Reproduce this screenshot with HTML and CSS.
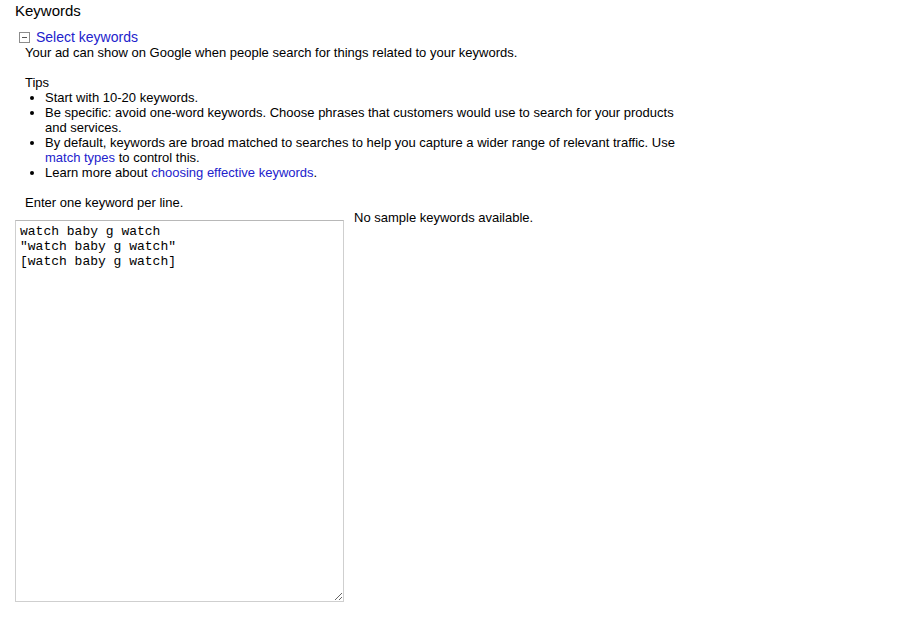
FILE: index.html
```html
<!DOCTYPE html>
<html lang="en">
<head>
  <meta charset="UTF-8">
  <title>Keywords</title>
  <link rel="stylesheet" href="styles.css">
</head>
<body>
  <div class="page">
    <!-- Section title -->
    <h2 class="title">Keywords</h2>

    <div class="section">
      <div class="section-head">
        <svg class="toggle" width="11" height="11" viewBox="0 0 11 11">
          <rect x="0.5" y="0.5" width="10" height="10" fill="#fff" stroke="#8c8c8c"/>
          <line x1="3" y1="5.5" x2="8" y2="5.5" stroke="#555"/>
        </svg>
        <a href="#" class="section-link">Select keywords</a>
      </div>

      <div class="section-body">
        <p>Your ad can show on Google when people search for things related to your keywords.</p>

        <div class="tips">
          <p>Tips</p>
          <ul>
            <li>Start with 10-20 keywords.</li>
            <li>Be specific: avoid one-word keywords. Choose phrases that customers would use to search for your products and services.</li>
            <li>By default, keywords are broad matched to searches to help you capture a wider range of relevant traffic. Use <a href="#">match types</a> to control this.</li>
            <li>Learn more about <a href="#">choosing effective keywords</a>.</li>
          </ul>
        </div>
      </div>

      <!-- Keyword entry -->
      <div class="entry">
        <div class="entry-main">
          <label for="keywordInput">Enter one keyword per line.</label>
          <textarea id="keywordInput">watch baby g watch
"watch baby g watch"
[watch baby g watch]</textarea>
        </div>
        <div class="samples">No sample keywords available.</div>
      </div>
    </div>
  </div>
</body>
</html>
```

FILE: styles.css
```css
body {
  margin: 0;
  font-family: Arial, "Liberation Sans", sans-serif;
  font-size: 13px;
  line-height: 15px;
  color: #000;
  background: #fff;
}

a {
  color: #2222cc;
  text-decoration: none;
}

p {
  margin: 0;
}

.page {
  padding-left: 15px;
}

.title {
  margin: 0;
  font-size: 15px;
  font-weight: normal;
  line-height: 22px;
}

.section-head {
  display: flex;
  align-items: center;
  height: 16px;
  margin-top: 7px;
}

.toggle {
  margin-left: 4px;
  margin-right: 6px;
  display: block;
}

.section-link {
  font-size: 14px;
  line-height: 16px;
}

.section-body {
  padding-left: 10px;
  width: 660px;
}

.tips {
  margin-top: 15px;
}

ul {
  margin: 0;
  padding-left: 20px;
}

.entry {
  display: flex;
  gap: 10px;
  margin-top: 15px;
}

.entry-main label {
  display: block;
  padding-left: 10px;
  margin-bottom: 10px;
}

textarea {
  display: block;
  width: 329px;
  height: 382px;
  box-sizing: border-box;
  margin: 0;
  padding: 3px 4px;
  border: 1px solid #cfcfcf;
  border-top-color: #b8b8b8;
  font-family: "Courier New", "Liberation Mono", monospace;
  font-size: 13px;
  line-height: 15px;
  color: #000;
  resize: both;
}

.samples {
  padding-top: 15px;
}
```
